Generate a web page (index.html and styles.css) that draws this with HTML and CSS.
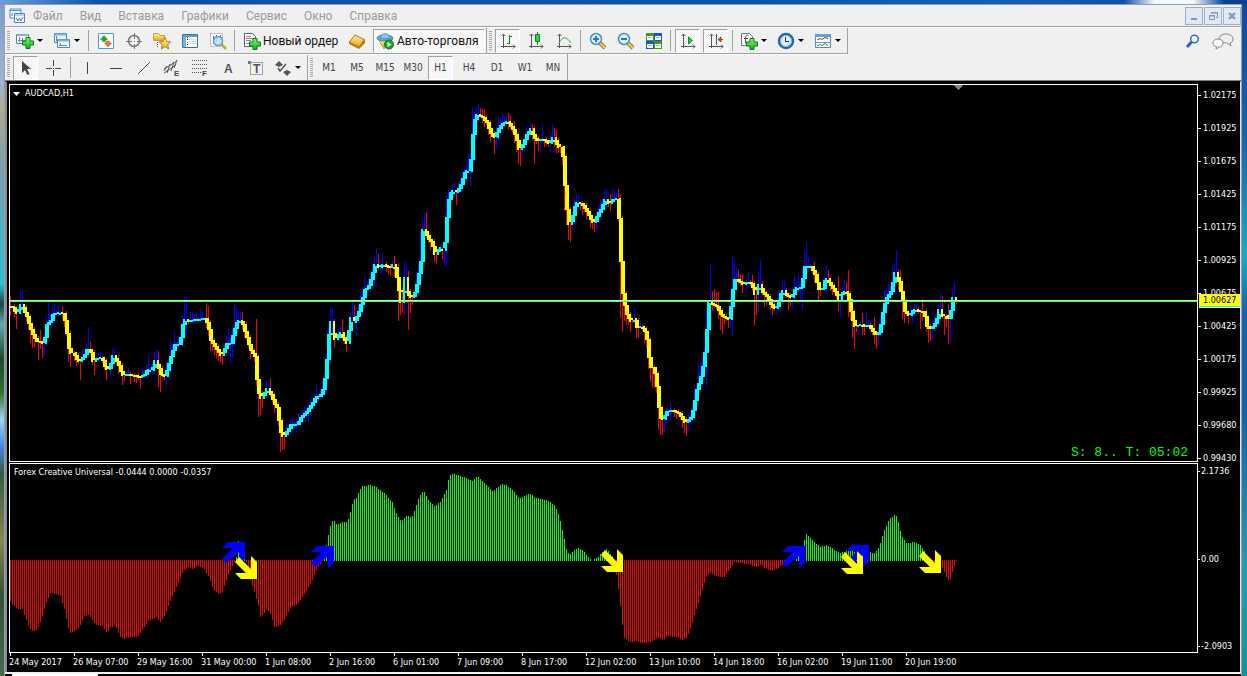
FILE: index.html
```
<!DOCTYPE html>
<html lang="ru">
<head>
<meta charset="utf-8">
<title>AUDCAD,H1</title>
<link rel="stylesheet" href="styles.css">
</head>
<body>
<svg width="0" height="0" class="defs" aria-hidden="true">
  <defs>
    <linearGradient id="gGreen" x2="0" y2="1"><stop stop-color="#7bff6b"/><stop offset="1" stop-color="#06b417"/></linearGradient>
    <linearGradient id="gGold" x2="0" y2="1"><stop stop-color="#fff3a0"/><stop offset="1" stop-color="#e3a51c"/></linearGradient>
    <symbol id="plus" viewBox="0 0 12 12"><path d="M4 .5h4V4h3.500v4H8v3.500H4V8H.5V4H4z" fill="url(#gGreen)" stroke="#087a12"/></symbol>
    <symbol id="axes" viewBox="0 0 18 18"><path d="M4.500 2v14M2 14.500h14M2.500 4l2-2 2 2M14 12.500l2 2-2 2" fill="none" stroke="#555"/></symbol>
    <symbol id="lens" viewBox="0 0 18 18"><path d="M11 11l5 5" stroke="#a07410" stroke-width="4"/><path d="M11 11l5 5" stroke="#f6d04c" stroke-width="2"/><circle cx="7" cy="7" r="5.500" fill="#d5ecfb" stroke="#4a90c4" stroke-width="1.500"/></symbol>
  </defs>
</svg>
<div class="window">
  <header class="menubar">
    <svg class="app-icon" viewBox="0 0 16 16" width="16" height="16"><path d="M1 1h11v9H1z" fill="#fff" stroke="#4a90e8"/><path d="M1 2.500h11" stroke="#4a90e8"/><path d="M5.500 5.500h10v9h-10z" fill="#fff" stroke="#4a80e0"/><path d="M6 7h9" stroke="#6aa4f0"/><path d="M3 5v3M7 10l2 3 1.500-3 1.500 3 2-4" fill="none" stroke="#3a78d8"/></svg>
    <nav class="menus"><button>Файл</button><button>Вид</button><button>Вставка</button><button>Графики</button><button>Сервис</button><button>Окно</button><button>Справка</button></nav>
    <div class="winbtns">
      <button aria-label="Свернуть"><svg viewBox="0 0 12 12" width="12" height="12"><path d="M3 9h6" stroke="#8795a4" stroke-width="2"/></svg></button>
      <button aria-label="Восстановить"><svg viewBox="0 0 12 12" width="12" height="12" fill="none" stroke="#8795a4"><path d="M4.500 4V2.500h6v5H9M4.500 3h6"/><path d="M2.500 5.500h5v4h-5zM2 6h6"/></svg></button>
      <button aria-label="Закрыть"><svg viewBox="0 0 12 12" width="12" height="12"><path d="M3 3l6 6M9 3l-6 6" stroke="#8795a4" stroke-width="2"/></svg></button>
    </div>
  </header>

  <div class="bars">
    <div class="toolbar first">
      <i class="grip"></i>
      <button class="tool drop" aria-label="Новый график"><svg viewBox="0 0 18 18"><path d="M.5 2.500h12v9H.5z" fill="#fff" stroke="#4a8cc4"/><path d="M1 3h11" stroke="#7ab4e4" stroke-width="2"/><path d="M3.500 5v5M2 8.500h7M6.500 6v3" stroke="#68a" fill="none"/><use href="#plus" x="6" y="5" width="12" height="12"/></svg></button>
      <button class="tool drop" aria-label="Профили"><svg viewBox="0 0 18 18"><path d="M1.500 1.500h12v9h-12z" fill="#e5f2fd" stroke="#4a8cc4"/><path d="M2 2.500h11" stroke="#7ab4e4" stroke-width="2"/><path d="M3.500 4v5h3" stroke="#68a" fill="none"/><path d="M4.500 7.500h12v8h-12z" fill="#eef7ff" stroke="#4a8cc4"/><path d="M5 8.500h11" stroke="#7ab4e4" stroke-width="2"/><path d="M7.500 11v3M6 13.500h8" stroke="#68a"/></svg></button>
      <i class="sep"></i>
      <button class="tool" aria-label="Обзор рынка"><svg viewBox="0 0 18 18"><path d="M1.500 1.500h15v15h-15z" fill="#fff" stroke="#4b9be0"/><path d="M3.500 7.500L7 3.500l3.500 4h-2v2h-3v-2z" fill="#27a52e" stroke="#117a1b" stroke-width=".5"/><path d="M7.500 11l3.500 4 3.500-4h-2V9h-3v2z" fill="#ef7740" stroke="#c2400f" stroke-width=".5"/></svg></button>
      <button class="tool" aria-label="Окно данных"><svg viewBox="0 0 18 18" fill="none" stroke="#777"><circle cx="9" cy="9" r="5.500" stroke-width="1.500"/><path d="M9.500 1v6M9.500 12v5M1 9.500h6M12 9.500h5M9 9.500h1"/></svg></button>
      <button class="tool" aria-label="Навигатор"><svg viewBox="0 0 18 18"><path d="M.5 1.500h5l2 2h4v5H.5z" fill="url(#gGold)" stroke="#c9a032"/><path d="M4.500 10v6" stroke="#555" stroke-dasharray="1 1"/><path d="M12 5.500l1.800 4 4 .4-3 2.800.9 4.300-3.700-2.300L8.300 17l.9-4.300-3-2.800 4-.4z" fill="url(#gGold)" stroke="#b8851a"/></svg></button>
      <button class="tool" aria-label="Терминал"><svg viewBox="0 0 18 18"><path d="M1.500 2.500h15v13h-15z" fill="#fff" stroke="#2f76b8"/><path d="M2 4h14" stroke="#58a2dc" stroke-width="2"/><path d="M3.500 5v10" stroke="#74b4e8" stroke-width="3"/><path d="M6 7.500h1M6 12.500h1" stroke="#000"/><path d="M6 5.500h1M6 10.500h1" stroke="red"/><path d="M8 7.500h7M8 9.500h7M8 11.500h7" stroke="#ddd"/></svg></button>
      <button class="tool" aria-label="Тестер стратегий"><svg viewBox="0 0 18 18"><path d="M1.500 1.500h12v13h-12z" fill="#fff" stroke="#9ab" stroke-dasharray="2 1"/><path d="M4.500 4v6M7.500 3v6M11.500 3v5" stroke="#567"/><path d="M12 12l5 5" stroke="#d6a21c" stroke-width="2.500"/><circle cx="9" cy="9" r="4.500" fill="#b9dcf6" fill-opacity=".85" stroke="#5d9dd0" stroke-width="1.500"/></svg></button>
      <i class="sep"></i>
      <button class="tool label order"><svg viewBox="0 0 18 18"><path d="M1.500 1.500h8l3 3v10h-11z" fill="#fff" stroke="#666"/><path d="M3 4.500h5M3 6.500h7M3 8.500h5M3 11.500h3" stroke="#888"/><use href="#plus" x="6" y="6" width="12" height="12"/></svg>Новый ордер</button>
      <button class="tool" aria-label="MetaEditor"><svg viewBox="0 0 18 18"><path d="M1 10L7 3l10 5v3l-6 6L1 12z" fill="#b9780c"/><path d="M1 10c2-1 3-4 6-7l10 5c-3 1-3 4-6 7z" fill="url(#gGold)" stroke="#b9780c"/></svg></button>
      <button class="tool label on auto"><svg viewBox="0 0 18 18"><path d="M2 7l6 10 9-10z" fill="url(#gGold)" stroke="#c79a22"/><ellipse cx="9" cy="6" rx="8" ry="3" fill="#5eaad8" stroke="#3c86b8"/><path d="M4.500 5.500c0-5 9-5 9 0-2 1.500-7 1.500-9 0z" fill="#8acbee" stroke="#4a94c4"/><circle cx="13" cy="12.500" r="4.500" fill="#18a52a" stroke="#0a7a18"/><path d="M11.500 10l4 2.500-4 2.500z" fill="#fff"/></svg>Авто-торговля</button>
      <i class="edge"></i><i class="grip"></i>
      <button class="tool on" aria-label="Бары"><svg viewBox="0 0 18 18"><use href="#axes"/><path d="M10.500 3v9M8 11.500h2M11 4.500h2" fill="none" stroke="#0a8a18"/></svg></button>
      <button class="tool" aria-label="Свечи"><svg viewBox="0 0 18 18"><use href="#axes"/><path d="M10.500 0v13" stroke="#0a8a18"/><path d="M8.500 2.500h4v7h-4z" fill="#23d842" stroke="#0a8a18"/></svg></button>
      <button class="tool" aria-label="Линия"><svg viewBox="0 0 18 18"><use href="#axes"/><path d="M4 11c4-7 7-7 12 0" fill="none" stroke="#3ba54a"/></svg></button>
      <i class="sep"></i>
      <button class="tool" aria-label="Увеличить"><svg viewBox="0 0 18 18"><use href="#lens"/><path d="M4 7h6M7 4v6" stroke="#2a7ab8" stroke-width="2"/></svg></button>
      <button class="tool" aria-label="Уменьшить"><svg viewBox="0 0 18 18"><use href="#lens"/><path d="M4 7h6" stroke="#2a7ab8" stroke-width="2"/></svg></button>
      <button class="tool" aria-label="Окна мозаикой"><svg viewBox="0 0 18 18"><path d="M1 1h8v8H1zM9 9h8v8H9z" fill="#3f9d12"/><path d="M9 1h8v8H9zM1 9h8v8H1z" fill="#2252c4"/><path d="M2 4h6v4H2zM10 4h6v4h-6zM2 12h6v4H2zM10 12h6v4h-6z" fill="#f4f8ff"/><path d="M3 5.500h4M11 5.500h4M3 13.500h4M11 13.500h4" stroke="#9bc"/></svg></button>
      <i class="sep"></i>
      <button class="tool on" aria-label="Автопрокрутка"><svg viewBox="0 0 18 18"><use href="#axes"/><path d="M9.500 5v7l4-3.500z" fill="#35c848" stroke="#0a8a18"/></svg></button>
      <button class="tool on" aria-label="Сдвиг графика"><svg viewBox="0 0 18 18"><use href="#axes"/><path d="M9.500 2v11" stroke="#27609a"/><path d="M16 7.500h-4M14 5l-3 2.500 3 2.500z" fill="#c33c10" stroke="#c33c10"/></svg></button>
      <i class="sep"></i>
      <button class="tool drop" aria-label="Индикаторы"><svg viewBox="0 0 18 18"><path d="M1.500 1.500h8l3 3v9h-11z" fill="#fff" stroke="#777"/><path d="M8.500 3.500c-3-1-3 1-3 8M4 6.500h4" fill="none" stroke="#444"/><use href="#plus" x="6" y="6" width="12" height="12"/></svg></button>
      <button class="tool drop" aria-label="Периоды"><svg viewBox="0 0 18 18"><circle cx="9" cy="9" r="7" fill="#fff" stroke="#1d67b8" stroke-width="2.500"/><circle cx="9" cy="9" r="5.500" fill="#e4f2fd" stroke="#6db2ec"/><path d="M8.500 5v4.500H12" fill="none" stroke="#333"/></svg></button>
      <button class="tool drop" aria-label="Шаблоны"><svg viewBox="0 0 18 18"><path d="M1.500 2.500h15v13h-15z" fill="#fff" stroke="#4f8fc8"/><path d="M1 3.500h16" stroke="#5fa2dc" stroke-width="3"/><path d="M2 10.500h14" stroke="#5a9ad0"/><path d="M3 8l3-1.500 2 1 3-2 3 1" fill="none" stroke="#a33012"/><path d="M3 14l3-1.500 2 1 3-2 3 2" fill="none" stroke="#2b8c35"/></svg></button>
    </div>
    <div class="corner">
      <button class="tool" aria-label="Поиск"><svg viewBox="0 0 18 18"><path d="M7.500 10L3 15" stroke="#2a5ed0" stroke-width="3"/><circle cx="10.500" cy="7" r="3.800" fill="#fff" stroke="#2a6ae0" stroke-width="1.500"/></svg></button>
      <button class="tool chat" aria-label="Сообщения"><svg viewBox="0 0 22 18"><path d="M14 2c4 0 7 2 7 5s-2 4-3 4l1 3-4-3c-5 0-8-1-8-4s3-5 7-5z" fill="#eee" stroke="#888"/><path d="M6 7c3 0 5 1.500 5 4s-2 4-4 4l-3 2 .5-2.500C2 14 1 13 1 11s2-4 5-4z" fill="#f8f8ff" stroke="#888"/></svg></button>
    </div>
    <div class="toolbar second">
      <i class="grip"></i>
      <button class="tool on" aria-label="Курсор"><svg viewBox="0 0 18 18"><path d="M5 2v12l3-3 2.500 5 2-1L10 10h4z" fill="#444"/></svg></button>
      <button class="tool" aria-label="Перекрестие"><svg viewBox="0 0 18 18"><path d="M8.500 1v6M8.500 11v6M1 9.500h6M10 9.500h6M8 9.500h1" stroke="#444"/></svg></button>
      <i class="sep"></i>
      <button class="tool" aria-label="Вертикальная линия"><svg viewBox="0 0 18 18"><path d="M8.500 3v12" stroke="#444"/></svg></button>
      <button class="tool" aria-label="Горизонтальная линия"><svg viewBox="0 0 18 18"><path d="M3 9.500h12" stroke="#444"/></svg></button>
      <button class="tool" aria-label="Трендовая линия"><svg viewBox="0 0 18 18"><path d="M3 15L15 3" stroke="#555"/></svg></button>
      <button class="tool" aria-label="Равноудалённый канал"><svg viewBox="0 0 18 18"><path d="M1 10L14 2M1 14l12-8M4 14l3-9M8 12l3-9M1 12l3-5M11 9l3-8" stroke="#555"/><text x="11" y="17" class="glyph-s">E</text></svg></button>
      <button class="tool" aria-label="Фибоначчи"><svg viewBox="0 0 18 18"><path d="M1 1.500h15M1 5.500h15M1 9.500h15M1 13.500h9" stroke="#555" stroke-dasharray="1 1"/><text x="11" y="17" class="glyph-s">F</text></svg></button>
      <button class="tool" aria-label="Текст"><svg viewBox="0 0 18 18"><text x="5" y="14" class="glyph">A</text></svg></button>
      <button class="tool" aria-label="Метка"><svg viewBox="0 0 18 18"><path d="M3.500 3.500h12v12h-12z" fill="none" stroke="#555" stroke-dasharray="1 1"/><path d="M1 2h3v3H1z" fill="#777"/><text x="6" y="14" class="glyph">T</text></svg></button>
      <button class="tool drop" aria-label="Стрелки"><svg viewBox="0 0 18 18"><path d="M1 6l4-4 4 4-4 2zM9 13l4-2 4 2-4 4z" fill="#555"/><path d="M4 9l2 3 6-7" fill="none" stroke="#555" stroke-width="1.500"/></svg></button>
      <i class="edge"></i><i class="grip"></i>
      <button class="tool tf">M1</button><button class="tool tf">M5</button><button class="tool tf">M15</button><button class="tool tf">M30</button><button class="tool tf on">H1</button><button class="tool tf">H4</button><button class="tool tf">D1</button><button class="tool tf">W1</button><button class="tool tf">MN</button>
    </div>
  </div>

  <main class="chart">
    <section class="plot price-plot">
      <h1 class="caption"><svg width="7" height="4" viewBox="0 0 7 4"><path d="M0 0h7L3.500 4z" fill="#fff"/></svg>AUDCAD,H1</h1>
      <svg class="canvas" id="price" height="376"></svg>
      <p class="timer">S: 8.. T: 05:02</p>
    </section>
    <div class="axis price-axis">
      <span>1.02175</span><span>1.01925</span><span>1.01675</span><span>1.01425</span><span>1.01175</span><span>1.00925</span><span>1.00675</span><span>1.00425</span><span>1.00175</span><span>0.99925</span><span>0.99680</span><span>0.99430</span>
      <b class="current">1.00627</b>
    </div>
    <section class="plot osc-plot">
      <h2 class="caption">Forex Creative Universal -0.0444 0.0000 -0.0357</h2>
      <svg class="canvas" id="osc" height="188"></svg>
    </section>
    <div class="axis osc-axis"><span>2.1736</span><span>0.00</span><span>-2.0903</span></div>
    <div class="times">
      <span>24 May 2017</span><span>26 May 07:00</span><span>29 May 16:00</span><span>31 May 00:00</span><span>1 Jun 08:00</span><span>2 Jun 16:00</span><span>6 Jun 01:00</span><span>7 Jun 09:00</span><span>8 Jun 17:00</span><span>12 Jun 02:00</span><span>13 Jun 10:00</span><span>14 Jun 18:00</span><span>16 Jun 02:00</span><span>19 Jun 11:00</span><span>20 Jun 19:00</span>
    </div>
  </main>
  <footer class="tabs"><i></i></footer>
</div>
<script src="chart.js"></script>
</body>
</html>
```
FILE: styles.css
```
* { box-sizing: border-box; }
body {
  margin: 0;
  min-height: 100vh;
  padding: 4px 5px 0 4px;
  font-family: Roboto, "Noto Sans", sans-serif;
  font-size: 12px;
  background:
    radial-gradient(ellipse 50px 12px at 1174px 2px, #f4f8fc 40%, transparent 100%) no-repeat,
    linear-gradient(90deg, #6d9fd8, #0d50a4 8%, #0a55ac 60%, #1560b4 80%, #0b3f90) top / 100% 5px no-repeat,
    linear-gradient(#7d9cc8, #9db4cf 12%, #b3a98c 16%, #7c9cae 25%, #2ebfd0 42%, #24404a 45%, #5faab0 48%, #1d4a28 53%, #2f6e2e 58%, #9cd6f0 62%, #4a86e8 66%, #355a40 70%, #8a8454 80%, #35503a 88%, #49684e) left / 5px 100% no-repeat,
    linear-gradient(#14489c, #1a62ac 20%, #1fa8c0 38%, #1a62a8 46%, #1560a8 60%, #2c9ab0 85%, #168f9c);
}
.defs { position: absolute; }
.window {
  min-height: calc(100vh - 4px);
  display: flex;
  flex-direction: column;
  border: solid #8fa3b8;
  border-width: 1px 1px 0;
  background: #f0f0f0;
}
button {
  font: inherit;
  border: 0;
  padding: 0;
  background: none;
  color: inherit;
  white-space: nowrap;
}
.menubar {
  display: flex;
  align-items: center;
  height: 22px;
  padding-left: 4px;
  border-bottom: 1px solid #a0a0a0;
  color: #9a9a9a;
}
.menus {
  display: flex;
  flex: 1;
  gap: 17px;
  padding-left: 8px;
}
.winbtns { display: flex; gap: 1px; }
.winbtns button {
  width: 18px;
  height: 18px;
  border: 1px solid #9fb0c2;
  background: #dfeaf6;
  display: grid;
  place-items: center;
}
.bars {
  display: grid;
  grid-template-columns: 1fr auto;
  border-top: 1px solid #fff;
  border-bottom: 1px solid #808080;
}
.toolbar {
  display: flex;
  align-items: center;
  justify-self: start;
  height: 26px;
  border-right: 1px solid #a0a0a0;
}
.first { border-bottom: 1px solid #a0a0a0; box-shadow: 0 1px #fff; }
.second { padding-top: 1px; }
.grip {
  width: 3px;
  height: 19px;
  margin: 0 2px;
  background: repeating-linear-gradient(#a8a8a8 0 1px, transparent 1px 2px);
}
.sep {
  width: 6px;
  height: 21px;
  background: linear-gradient(#a0a0a0, #a0a0a0) 2px 0 / 1px 100% no-repeat;
}
.edge { width: 1px; height: 25px; background: #a0a0a0; }
.tool {
  width: 28px;
  height: 24px;
  display: flex;
  align-items: center;
  justify-content: center;
}
.tool svg { width: 18px; height: 18px; flex: none; }
.drop {
  width: 37px;
  justify-content: flex-start;
  gap: 3px;
  padding-left: 4px;
}
.drop::after {
  content: "";
  border: 3px solid transparent;
  border-top-color: #000;
  border-bottom: 0;
}
.on {
  width: 25px;
  margin: 0 2px 0 1px;
  border: 1px solid;
  border-color: #a0a0a0 #fff #fff #a0a0a0;
  background: repeating-conic-gradient(#fff 0 25%, #f0f0f0 0 50%) 0 0 / 2px 2px;
}
.label { justify-content: flex-start; color: #111; }
.order { width: 105px; padding-left: 5px; gap: 2px; }
.auto { width: 112px; margin: 0 1px 0 2px; padding-left: 2px; gap: 3px; }
.corner { display: flex; align-items: center; padding-right: 2px; }
.chat { width: 32px; }
.chat svg { width: 22px; }
.tf {
  font-family: "DejaVu Sans Condensed", "DejaVu Sans", sans-serif;
  font-size: 10px;
  color: #444;
}
.glyph { font: bold 12px "Liberation Sans", sans-serif; fill: #555; }
.glyph-s { font: bold 8px "Liberation Sans", sans-serif; fill: #444; }

.chart {
  flex: 1;
  display: grid;
  grid-template-columns: 1fr 42px;
  grid-template-rows: auto auto 1fr;
  row-gap: 1px;
  padding: 2px 0 0 2px;
  border: solid #8c8c8c;
  border-width: 1px 1px 0 2px;
  border-top-color: #000;
  border-right-color: #e4e4e4;
  background: #000;
  color: #fff;
  font-family: "DejaVu Sans Condensed", "DejaVu Sans", sans-serif;
  font-size: 9px;
  line-height: 11px;
}
.plot { position: relative; border: 1px solid #fff; min-width: 0; }
.canvas { display: block; width: 100%; }
.caption {
  position: absolute;
  top: 3px;
  left: 4px;
  margin: 0;
  font: inherit;
}
.price-plot .caption { display: flex; align-items: center; gap: 5px; left: 3px; }
.timer {
  position: absolute;
  right: 9px;
  bottom: 1px;
  margin: 0;
  font: 13px/14px "Liberation Mono", monospace;
  color: #0f0;
}
.axis {
  position: relative;
  display: flex;
  flex-direction: column;
  justify-content: space-between;
}
.axis span { position: relative; padding-left: 5px; }
.axis span::before {
  content: "";
  position: absolute;
  left: 0;
  top: 5px;
  width: 3px;
  height: 1px;
  background: #fff;
}
.price-axis { padding-top: 6px; margin-bottom: -2px; }
.osc-axis { padding: 3px 0 1px; }
.osc-axis span { padding-left: 3px; }
.osc-axis span::before { width: 2px; }
.current {
  position: absolute;
  top: 210px;
  left: 1px;
  right: 0;
  padding-left: 4px;
  font-weight: normal;
  line-height: 12px;
  color: #000;
  background: #ff0;
  border-bottom: 1px solid #0ff;
  box-shadow: 0 1px #fff;
}
.times { display: flex; grid-column: 1 / -1; margin-top: -1px; overflow: hidden; height: 19px; }
.times span {
  position: relative;
  flex: none;
  width: 64px;
  padding-top: 4px;
  white-space: nowrap;
}
.times span::before {
  content: "";
  position: absolute;
  left: 1px;
  top: 0;
  width: 1px;
  height: 3px;
  background: #fff;
}
.tabs {
  height: 4px;
  padding: 2px 0 0 7px;
  background: linear-gradient(#f0f0f0 0 2px, #000 2px);
}
.tabs i { display: block; width: 86px; height: 2px; background: #fff; }
```
FILE: chart.js
```
// Average price path: "x,y" knots in window pixels, one candle every 2px.
const path = `10,307 15,308 17,315 19,313 22,305 24,308 28,317 32,330 35,337 38,342 40,342 44,344 47,335 48,325 52,321 54,315 57,314 60,313 64,314 67,325 69,343 71,355 75,352 77,359 80,362 85,357 89,348 93,354 94,362 97,359 103,358 107,370 111,368 114,356 117,360 121,368 123,376 128,375 135,376 140,378 146,375 149,369 153,371 156,361 160,369 162,375 166,377 169,368 172,357 176,345 181,345 183,330 185,319 188,322 197,320 207,319 210,330 212,341 217,348 222,356 225,351 228,344 232,344 235,332 239,320 243,322 247,335 252,351 257,358 258,380 261,401 264,396 268,389 272,395 275,403 278,408 281,427 283,438 287,434 292,425 298,425 302,418 308,412 313,405 317,397 321,397 325,387 327,370 329,350 330,335 332,322 334,334 336,340 342,333 345,340 348,344 352,318 354,323 357,320 360,312 363,302 366,290 369,289 373,277 376,265 380,268 383,265 388,267 391,269 394,265 397,270 399,285 402,303 404,292 406,278 408,292 411,298 415,297 418,285 422,262 424,230 426,232 430,240 433,243 436,255 438,252 442,248 445,253 447,232 449,203 453,190 457,194 462,185 467,170 471,172 473,148 475,122 478,115 483,117 488,123 493,137 496,138 499,130 503,124 509,122 513,128 517,137 520,150 523,147 527,137 532,129 535,138 539,142 543,139 548,143 551,145 553,136 557,143 560,148 563,146 565,168 567,203 570,225 573,220 577,203 582,204 587,210 591,218 595,224 598,217 603,208 606,200 610,204 614,200 619,199 621,238 623,285 625,302 628,315 632,322 635,318 638,328 643,327 647,333 649,347 651,368 654,368 657,377 659,397 661,418 664,420 668,412 674,411 680,414 685,422 687,423 692,418 695,407 698,390 702,377 705,362 707,343 710,303 713,305 718,307 723,317 730,320 733,300 735,280 738,280 744,285 748,283 753,284 756,295 760,285 764,293 769,298 773,307 777,309 780,302 783,290 787,295 793,298 797,287 801,290 803,285 806,267 812,267 816,275 820,290 824,289 827,277 830,283 835,290 840,300 843,293 847,291 850,300 853,318 856,327 862,325 865,328 869,325 873,330 877,336 881,332 883,317 887,300 892,292 896,273 900,282 903,297 906,312 910,316 915,310 920,312 925,312 928,327 931,330 937,323 940,310 943,317 947,315 949,323 953,307 954,298 956,301`;
// Wick extremes.
const highs = `10,296 20,291 22,291 40,330 48,302 52,306 54,304 58,306 62,306 88,327 90,342 112,350 114,348 128,367 148,355 156,349 158,351 170,341 174,331 182,315 184,297 186,297 192,312 200,308 206,303 208,306 228,328 234,303 236,307 240,311 242,312 256,319 266,381 270,378 316,385 330,307 332,309 342,319 350,311 352,302 354,305 360,292 364,275 372,263 374,257 376,248 378,254 382,253 394,256 398,263 404,261 406,267 408,271 416,272 420,233 422,219 424,213 426,212 446,195 448,190 452,184 462,171 466,160 468,154 470,163 472,107 474,112 476,106 478,104 480,108 482,109 484,109 498,117 500,118 502,113 504,117 506,115 508,113 510,116 514,121 526,129 530,125 532,124 534,128 542,124 552,124 554,128 556,130 576,194 578,195 596,212 600,200 604,190 606,189 610,195 612,190 614,190 616,193 618,189 620,195 634,308 640,321 694,385 696,392 698,364 700,363 702,358 704,348 706,311 708,300 710,265 712,291 714,289 716,293 718,292 732,255 734,261 736,267 738,270 740,274 742,275 748,272 752,275 758,270 760,260 762,281 778,290 782,281 784,281 794,276 798,274 802,269 804,251 806,242 808,257 814,262 826,265 828,270 838,276 844,279 846,282 848,270 862,313 866,312 874,317 884,290 886,287 888,284 892,266 894,264 896,250 898,270 900,270 922,299 932,320 940,293 942,296 948,304 952,292 954,282 956,297`;
const lows = `16,329 30,343 32,348 34,347 38,360 42,358 44,356 68,362 70,367 80,380 94,375 106,380 110,377 122,385 140,389 158,387 160,392 166,385 186,335 210,351 212,351 216,358 218,361 222,365 230,364 232,358 258,417 260,415 262,408 280,452 282,450 284,449 296,433 308,422 356,335 374,287 380,274 390,276 398,321 400,315 402,313 404,314 408,330 410,313 412,305 434,262 436,264 444,266 446,267 456,205 470,185 488,135 494,154 496,149 516,152 518,164 520,166 522,155 534,164 538,151 540,152 550,153 556,153 558,153 560,153 564,211 566,225 568,240 570,242 572,231 582,215 590,228 594,232 596,232 620,318 622,332 624,321 626,325 630,332 636,338 638,338 644,343 646,345 648,369 650,382 652,388 654,388 656,393 658,430 660,435 662,435 664,433 666,423 670,421 682,426 684,433 686,436 688,431 706,386 720,330 722,334 728,328 730,328 732,335 742,293 746,293 754,326 756,315 758,312 764,307 772,315 776,315 788,311 792,309 800,300 802,310 814,283 818,300 838,311 840,317 848,317 852,338 854,349 858,335 864,335 874,344 876,349 878,344 902,319 904,323 908,324 912,323 920,329 926,332 928,343 930,341 932,340 944,335 948,344 950,342`;
// Oscillator envelope, zero level at y = 560.
const wave = `10,601 14,606 18,609 22,609 26,620 30,629 33,632 37,629 41,620 46,602 50,593 57,594 60,596 64,609 68,628 70,633 75,631 79,627 84,616 89,615 95,625 102,626 107,633 110,627 115,626 120,637 124,639 130,637 137,637 142,630 148,621 156,617 160,622 165,614 171,598 178,583 183,571 188,567 192,569 198,566 204,569 209,578 213,590 218,594 222,592 226,580 230,570 234,562 236,557 238,541 240,549 242,556 246,562 250,580 254,592 258,606 260,617 264,613 267,609 271,616 274,627 279,626 284,620 291,606 297,605 304,594 312,580 317,568 321,563 323,559 325,550 327,540 329,530 331,522 333,519 337,525 342,522 347,522 350,512 353,500 356,498 359,490 362,486 370,485 376,487 384,493 392,502 397,516 401,521 407,515 411,518 415,508 419,496 423,490 428,500 434,506 440,502 446,490 449,475 451,474 458,475 466,478 472,481 477,476 482,481 488,487 492,491 498,487 501,484 506,485 512,490 519,498 524,496 529,493 534,497 541,499 548,501 554,505 559,516 563,534 566,549 569,555 574,550 578,548 583,551 588,557 592,560 597,558 601,553 606,549 612,556 616,575 618,589 620,606 622,625 624,638 630,642 636,641 641,643 646,643 654,640 657,638 662,640 668,636 675,637 683,640 687,637 690,628 695,612 701,593 706,577 710,573 718,577 724,577 729,570 734,562 740,563 748,564 756,567 760,565 766,569 772,571 778,568 783,564 792,561 797,558 800,553 802,546 806,534 812,540 820,547 827,545 833,549 840,553 850,550 860,556 868,552 875,553 879,546 884,530 889,519 894,515 897,517 901,535 906,543 914,542 919,544 924,551 928,562 934,562 940,565 943,569 947,580 950,579 953,568 956,561`;

const parse = s => s.trim().split(/\s+/).map(p => p.split(',').map(Number));
const sampler = knots => x => {
  let i = knots.findIndex(k => k[0] >= x);
  if (i < 0) return knots[knots.length - 1][1];
  if (i === 0) return knots[0][1];
  const [x0, y0] = knots[i - 1], [x1, y1] = knots[i];
  return y0 + (y1 - y0) * (x - x0) / (x1 - x0);
};
const bar = (x, w, a, b) => `M${x} ${a}h${w}V${b}h-${w}z`;
const shape = (d, fill) => `<path d="${d}" fill="${fill}"/>`;

const price = sampler(parse(path));
const hi = new Map(parse(highs)), lo = new Map(parse(lows));
const d = { blue: '', red: '', cyan: '', yellow: '' };
let up = true;
for (let x = 10; x <= 956; x += 2) {
  const a = price(x - 2), b = price(x + 2);
  if (Math.abs(a - b) > 0.3) up = b < a;
  const top = Math.round(Math.min(a, b)) - 1;
  const bottom = Math.max(top + 2, Math.round(Math.max(a, b)));
  const r = (x * 7 + (x >> 2) * 5) % 9;
  const high = Math.min(hi.get(x) ?? 999, top - (up ? r : r % 3));
  const low = Math.max(lo.get(x) ?? 0, bottom + (up ? r % 3 : r));
  d[up ? 'blue' : 'red'] += bar(x, 1, high, low);
  d[up ? 'cyan' : 'yellow'] += bar(x - 1, 2, top, bottom);
}
document.getElementById('price').innerHTML =
  `<g transform="translate(-10 -85)" shape-rendering="crispEdges">
    ${shape(d.blue, '#00f')}${shape(d.red, '#f00')}${shape(d.cyan, '#0ff')}${shape(d.yellow, '#ff0')}
    <rect x="10" y="300" width="100%" height="1" fill="#ff0"/>
    <rect x="10" y="301" width="100%" height="1" fill="#0ff"/>
    <path d="M953 85h11l-5.500 5z" fill="#778899"/>
  </g>`;

const level = sampler(parse(wave));
let red = '', green = '';
for (let x = 10; x <= 956; x += 2) {
  const y = Math.round(level(x));
  if (y > 560) red += bar(x, 1, 560, y);
  else if (y < 560) green += bar(x, 1, y, 561);
}
const arrow = (points, fill) => ([x, y]) =>
  `<polygon points="${points}" transform="translate(${x} ${y})" fill="${fill}"/>`;
const rise = arrow('6,0 23,0 23,17 17,22 17,10 4,21 0,17 11,6 0,6', '#00f');
const fall = arrow('16,0 22,6 22,23 6,23 0,17 11,17 0,6 4,1 16,13', '#ff0');
document.getElementById('osc').innerHTML =
  `<g transform="translate(-10 -464)">
    <g shape-rendering="crispEdges">${shape(red, '#f00')}${shape(green, '#0f0')}</g>
    ${[[222, 542], [311, 546], [782, 546], [846, 545]].map(rise).join('')}
    ${[[235, 556], [601, 549], [841, 551], [919, 550]].map(fall).join('')}
  </g>`;
```
